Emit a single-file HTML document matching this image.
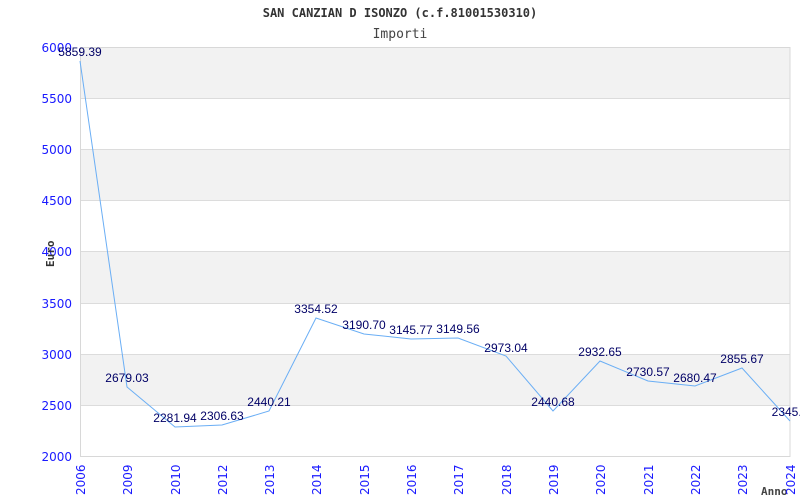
<!DOCTYPE html>
<html><head><meta charset="utf-8"><style>html,body{margin:0;padding:0;background:#fff;width:800px;height:500px;overflow:hidden}</style></head><body>
<svg width="800" height="500" xmlns="http://www.w3.org/2000/svg" style="display:block">
<rect width="800" height="500" fill="#fff"/>
<g fill="#f2f2f2">
<rect x="80" y="47" width="710" height="51"/>
<rect x="80" y="149" width="710" height="51"/>
<rect x="80" y="251" width="710" height="52"/>
<rect x="80" y="354" width="710" height="51"/>
</g>
<g stroke="#dcdcdc" stroke-width="1">
<line x1="80" y1="98.5" x2="790" y2="98.5"/>
<line x1="80" y1="149.5" x2="790" y2="149.5"/>
<line x1="80" y1="200.5" x2="790" y2="200.5"/>
<line x1="80" y1="251.5" x2="790" y2="251.5"/>
<line x1="80" y1="303.5" x2="790" y2="303.5"/>
<line x1="80" y1="354.5" x2="790" y2="354.5"/>
<line x1="80" y1="405.5" x2="790" y2="405.5"/>
</g>
<rect x="80.5" y="47.5" width="709.5" height="409" fill="none" stroke="#d8d8d8"/>
<text x="400" y="17" text-anchor="middle" font-family="DejaVu Sans Mono, monospace" font-weight="bold" font-size="12" fill="#333">SAN CANZIAN D ISONZO (c.f.81001530310)</text>
<text x="400" y="38" text-anchor="middle" font-family="DejaVu Sans Mono, monospace" font-size="13" fill="#444">Importi</text>
<g font-family="DejaVu Sans, sans-serif" font-size="12" fill="#1a1aff" text-anchor="end">
<text x="72" y="52">6000</text><text x="72" y="103">5500</text><text x="72" y="154">5000</text><text x="72" y="205">4500</text><text x="72" y="256">4000</text><text x="72" y="308">3500</text><text x="72" y="359">3000</text><text x="72" y="410">2500</text><text x="72" y="461">2000</text>
</g>
<text transform="translate(54,267) rotate(-90)" font-family="DejaVu Sans Mono, monospace" font-weight="bold" font-size="11" fill="#333">Euro</text>
<text x="761" y="495" font-family="DejaVu Sans Mono, monospace" font-weight="bold" font-size="11" fill="#444">Anno</text>
<g font-family="DejaVu Sans, sans-serif" font-size="12" fill="#1a1aff">
<text transform="translate(85,495) rotate(-90)">2006</text>
<text transform="translate(132,495) rotate(-90)">2009</text>
<text transform="translate(180,495) rotate(-90)">2010</text>
<text transform="translate(227,495) rotate(-90)">2012</text>
<text transform="translate(274,495) rotate(-90)">2013</text>
<text transform="translate(321,495) rotate(-90)">2014</text>
<text transform="translate(369,495) rotate(-90)">2015</text>
<text transform="translate(416,495) rotate(-90)">2016</text>
<text transform="translate(463,495) rotate(-90)">2017</text>
<text transform="translate(511,495) rotate(-90)">2018</text>
<text transform="translate(558,495) rotate(-90)">2019</text>
<text transform="translate(605,495) rotate(-90)">2020</text>
<text transform="translate(653,495) rotate(-90)">2021</text>
<text transform="translate(700,495) rotate(-90)">2022</text>
<text transform="translate(747,495) rotate(-90)">2023</text>
<text transform="translate(795,495) rotate(-90)">2024</text>
</g>
<polyline fill="none" stroke="#6aaef5" stroke-width="1" points="80,61 127,387 175,427 222,425 269,411 316,318 364,334 411,339 458,338 506,356 553,411 600,361 648,381 695,386 742,368 790,421"/>
<g font-family="Liberation Sans, sans-serif" font-size="12" fill="#000066" text-anchor="middle">
<text x="80" y="56">5859.39</text>
<text x="127" y="382">2679.03</text>
<text x="175" y="422">2281.94</text>
<text x="222" y="420">2306.63</text>
<text x="269" y="406">2440.21</text>
<text x="316" y="313">3354.52</text>
<text x="364" y="329">3190.70</text>
<text x="411" y="334">3145.77</text>
<text x="458" y="333">3149.56</text>
<text x="506" y="352">2973.04</text>
<text x="553" y="406">2440.68</text>
<text x="600" y="356">2932.65</text>
<text x="648" y="376">2730.57</text>
<text x="695" y="382">2680.47</text>
<text x="742" y="363">2855.67</text>
<text x="790" y="416">2345.9</text>
</g>
</svg>
</body></html>
